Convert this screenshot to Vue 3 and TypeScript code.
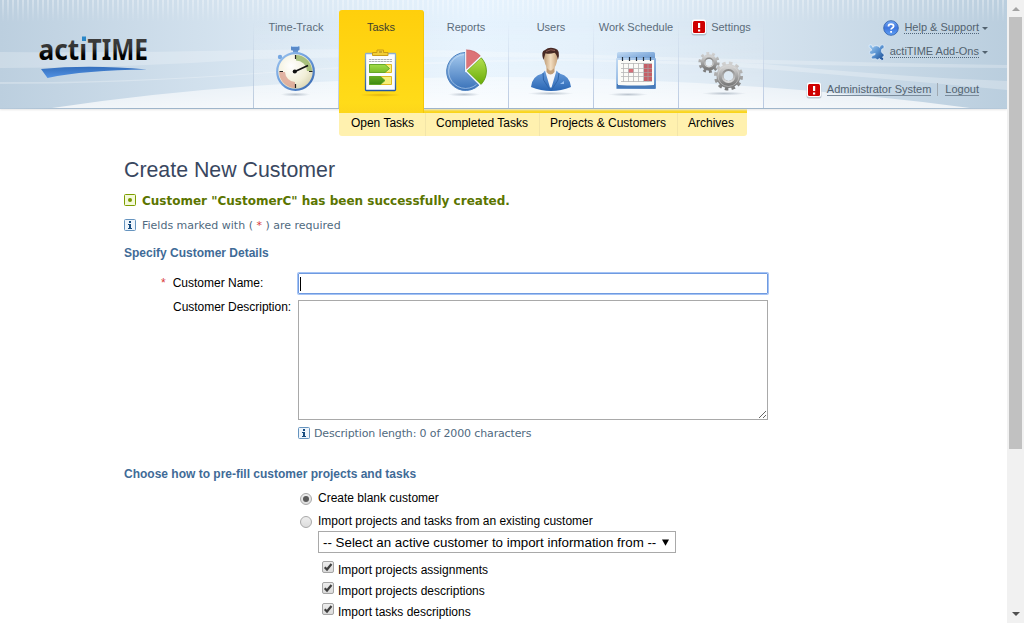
<script setup lang="ts">
interface MenuItem {
  id: string
  label: string
  alert?: boolean
}

const tabs: MenuItem[] = [
  { id: 'time', label: 'Time-Track' },
  { id: 'tasks', label: 'Tasks' },
  { id: 'reports', label: 'Reports' },
  { id: 'users', label: 'Users' },
  { id: 'schedule', label: 'Work Schedule' },
  { id: 'settings', label: 'Settings', alert: true },
]
const activeTab = 'tasks'

const subTabs: MenuItem[] = [
  { id: 'open', label: 'Open Tasks' },
  { id: 'completed', label: 'Completed Tasks' },
  { id: 'projects', label: 'Projects & Customers' },
  { id: 'archives', label: 'Archives' },
]

const importOptions: string[] = [
  'Import projects assignments',
  'Import projects descriptions',
  'Import tasks descriptions',
]
</script>

<template>
  <div class="window">
    <div class="page">
      <header class="header">
        <svg class="backdrop" width="1007" height="109" viewBox="0 0 1007 109">
          <defs>
            <linearGradient id="sky" x1="0" x2="1" y1="0" y2="0">
              <stop offset="0" stop-color="#bccfdf" />
              <stop offset="0.25" stop-color="#d7e5f1" />
              <stop offset="0.47" stop-color="#e6f3fe" />
              <stop offset="0.58" stop-color="#e3f0fb" />
              <stop offset="0.75" stop-color="#d5e3ef" />
              <stop offset="1" stop-color="#bacede" />
            </linearGradient>
            <linearGradient id="fade" x1="0" x2="0" y1="0" y2="1">
              <stop offset="0" stop-color="#fff" stop-opacity="0.34" />
              <stop offset="1" stop-color="#fff" stop-opacity="0" />
            </linearGradient>
            <pattern id="stripes" width="5" height="22" patternUnits="userSpaceOnUse">
              <rect x="2" width="2" height="22" fill="url(#fade)" />
            </pattern>
            <linearGradient id="hill" x1="0" x2="0" y1="0" y2="1">
              <stop offset="0" stop-color="#fff" stop-opacity="0.45" />
              <stop offset="1" stop-color="#fff" stop-opacity="0.75" />
            </linearGradient>
            <linearGradient id="baseline" x1="0" x2="1" y1="0" y2="0">
              <stop offset="0" stop-color="#b7cadb" />
              <stop offset="0.13" stop-color="#9fb5ca" />
              <stop offset="0.85" stop-color="#9fb5ca" />
              <stop offset="1" stop-color="#b7cadb" />
            </linearGradient>
          </defs>
          <rect width="1007" height="109" fill="url(#sky)" />
          <rect width="1007" height="22" fill="url(#stripes)" />
          <path d="M0 52 Q130 53 256 50 T600 55 Q820 62 1007 65 V68 Q800 66 700 61 Q450 54 256 59 Q130 68 0 68Z" fill="#fff" opacity="0.24" />
          <path d="M0 82 Q120 83 256 73 Q420 60 560 59 Q700 61 764 64 Q900 77 1007 81 V90 Q880 78 764 69 Q680 63 560 61 Q420 62 256 74 Q120 84 0 84Z" fill="#fff" opacity="0.26" />
          <path d="M52 108 Q250 78 500 77 Q750 79 970 108Z" fill="url(#hill)" />
          <rect y="108" width="1007" height="1" fill="url(#baseline)" />
        </svg>

        <div class="brand">
          <svg width="140" height="76" viewBox="34 16 140 76">
            <defs>
              <linearGradient id="ink" gradientUnits="userSpaceOnUse" x1="0" x2="0" y1="39" y2="61">
                <stop offset="0" stop-color="#3c3c3c" />
                <stop offset="0.4" stop-color="#333" />
                <stop offset="0.75" stop-color="#000" />
              </linearGradient>
              <linearGradient id="swoosh" x1="0" x2="0" y1="0" y2="1">
                <stop offset="0" stop-color="#346fbd" />
                <stop offset="1" stop-color="#5292e4" />
              </linearGradient>
            </defs>
            <text class="wordmark" x="38.500" y="60.200" textLength="48.500" lengthAdjust="spacingAndGlyphs" fill="url(#ink)">actı</text>
            <text class="wordmark" x="87.500" y="60.200" textLength="60.500" lengthAdjust="spacingAndGlyphs" fill="url(#ink)">TIME</text>
            <rect x="82" y="36.500" width="4" height="4.500" fill="#2b87c8" />
            <path d="M41 69 Q90 64.500 147 69.500 Q85 70 47.500 78Z" fill="url(#swoosh)" />
          </svg>
        </div>

        <nav class="tabs">
          <a v-for="tab in tabs" :key="tab.id" class="tab" :class="{ active: tab.id === activeTab }">
            <span class="tab-label">
              <svg v-if="tab.alert" class="alert" width="16" height="17" viewBox="0 0 16 17">
                <rect x="0.500" y="1" width="15" height="15.500" rx="2.500" fill="#9aa8b4" opacity="0.6" />
                <rect x="0.800" y="0.500" width="14.400" height="14.500" rx="2.500" fill="#fff" />
                <rect x="2" y="2" width="12" height="12" rx="1.500" fill="#cf0000" />
                <path d="M7 4h2.200v5H7zM7 10.500h2.200v2H7z" fill="#fff" />
              </svg>
              <span>{{ tab.label }}</span>
            </span>

            <svg v-if="tab.id === 'time'" class="icon" viewBox="254 44 84 54">
              <defs>
                <linearGradient id="rim" x1="0" x2="1" y1="0" y2="1">
                  <stop offset="0" stop-color="#9cc4ef" /><stop offset="0.5" stop-color="#6a9bdb" /><stop offset="1" stop-color="#3464ad" />
                </linearGradient>
                <radialGradient id="face" cx="0.38" cy="0.35" r="0.75">
                  <stop offset="0" stop-color="#fff" /><stop offset="0.6" stop-color="#f2efd8" /><stop offset="1" stop-color="#d4cfaa" />
                </radialGradient>
                <radialGradient id="shade">
                  <stop offset="0" stop-color="#63758a" stop-opacity="0.4" /><stop offset="1" stop-color="#63758a" stop-opacity="0" />
                </radialGradient>
              </defs>
              <ellipse cx="295.500" cy="94.500" rx="15" ry="2" fill="url(#shade)" />
              <rect x="293" y="49" width="5" height="4" fill="#6996d0" />
              <rect x="291" y="46" width="8.500" height="4.500" rx="1" fill="#5889c9" />
              <path d="M291.500 46.500h7" stroke="#b3d3f4" />
              <circle cx="280" cy="57" r="2.200" fill="#75a7e2" />
              <circle cx="295.500" cy="71.500" r="18.300" fill="url(#face)" stroke="url(#rim)" stroke-width="2.200" />
              <path d="M296 55 A16.500 16.500 0 0 1 312 71 H307 A11 11 0 0 0 296 60.500Z" fill="#87ab54" opacity="0.7" />
              <path d="M279 72 A16.500 16.500 0 0 0 295 88 V82 A10.500 10.500 0 0 1 285 72Z" fill="#d58a7c" opacity="0.62" />
              <path d="M295.500 55v4M295.500 84v4M279.500 71.500h3.500M309 71.500h3.500" stroke="#222" stroke-width="1.200" />
              <path d="M295 71.500 L308 65.500" stroke="#111" stroke-width="1.700" />
              <circle cx="294.800" cy="71.500" r="2.100" fill="#111" />
            </svg>

            <svg v-else-if="tab.id === 'tasks'" class="icon" viewBox="339 44 84 54">
              <defs>
                <linearGradient id="board" x1="0" x2="0" y1="0" y2="1">
                  <stop offset="0" stop-color="#8fb0cd" /><stop offset="1" stop-color="#2459a4" />
                </linearGradient>
                <linearGradient id="arrow" x1="0" x2="0" y1="0" y2="1">
                  <stop offset="0" stop-color="#a2dc48" /><stop offset="0.45" stop-color="#76b825" /><stop offset="1" stop-color="#3c8a10" />
                </linearGradient>
                <radialGradient id="amber">
                  <stop offset="0" stop-color="#b37b00" stop-opacity="0.4" /><stop offset="1" stop-color="#b37b00" stop-opacity="0" />
                </radialGradient>
              </defs>
              <ellipse cx="380.500" cy="95" rx="21" ry="1.800" fill="url(#amber)" />
              <rect x="365.500" y="53.500" width="30" height="37" rx="0.800" fill="#fcfdfd" stroke="url(#board)" stroke-width="1.300" />
              <path d="M372.500 55.500v-3h4.500v-2.500h6.500v2.500h4.500v3z" fill="#f1ce38" stroke="#ca9c17" />
              <path d="M379 52h3" stroke="#a58115" />
              <path d="M369 59.500h23M369 61.500h23" stroke="#aeb0b1" stroke-dasharray="2.500 0.500" />
              <path d="M369.500 64.500h22v8h-22zM369.500 76.500h22v8h-22z" fill="#f6ef79" stroke="#e0bb20" />
              <path d="M369.500 64.500h15.500l4.500 4-4.500 4h-15.500zM369.500 76.500h11l4.500 4-4.500 4h-11z" fill="url(#arrow)" stroke="#5da526" stroke-width="0.900" />
            </svg>

            <svg v-else-if="tab.id === 'reports'" class="icon" viewBox="424 44 84 54">
              <defs>
                <linearGradient id="pieBlue" x1="0" x2="0" y1="0" y2="1">
                  <stop offset="0" stop-color="#a7cbef" /><stop offset="1" stop-color="#3770b8" />
                </linearGradient>
                <linearGradient id="pieGreen" x1="0" x2="0" y1="0" y2="1">
                  <stop offset="0" stop-color="#b3e050" /><stop offset="1" stop-color="#69ac08" />
                </linearGradient>
              </defs>
              <ellipse cx="464" cy="94.500" rx="16" ry="2" fill="url(#shade)" />
              <path d="M465.200 52.500 A19 19 0 1 0 479 85 L465.200 71.500Z" fill="url(#pieBlue)" stroke="#4b80bf" stroke-width="1" />
              <path d="M464 54.500 A17 17 0 1 0 476.500 84.500" fill="none" stroke="#d2e6f9" stroke-width="0.800" opacity="0.7" />
              <path d="M466 50 A20 20 0 0 1 480.500 56 L466 70.500Z" fill="#dc7377" stroke="#c85054" stroke-width="0.800" />
              <path d="M467 71 L481 57.500 A19.500 19.500 0 0 1 481 84.500Z" fill="url(#pieGreen)" stroke="#629c16" stroke-width="0.900" />
              <path d="M465.700 50V71 L481 56.500M466 71 L481 86" fill="none" stroke="#f3f9ff" stroke-width="1.200" />
            </svg>

            <svg v-else-if="tab.id === 'users'" class="icon" viewBox="509 44 84 54">
              <defs>
                <linearGradient id="jacket" x1="0" x2="0" y1="0" y2="1">
                  <stop offset="0" stop-color="#6b9edc" /><stop offset="1" stop-color="#2966b4" />
                </linearGradient>
                <linearGradient id="skin" x1="0" x2="1" y1="0" y2="0">
                  <stop offset="0" stop-color="#bd9b76" /><stop offset="0.5" stop-color="#f3dec1" /><stop offset="1" stop-color="#c7a37b" />
                </linearGradient>
              </defs>
              <ellipse cx="550.500" cy="93.500" rx="23" ry="1.800" fill="url(#shade)" />
              <path d="M545 69 L543.500 74 L548 88 H554 L558 74 L556 69Z" fill="#f4f6f9" />
              <path d="M546.500 64h8v8q-4 5-8 0z" fill="#c19e78" />
              <path d="M543.800 55 Q543.500 50 550.500 50 Q558 50 557.500 56 Q557.200 67 552 70 Q550.500 71 549 70 Q544 66 543.800 55Z" fill="url(#skin)" />
              <path d="M543.400 60 Q540.500 51 545 50 Q549 46.500 555 48.500 Q561 50 557.900 60 Q557 54.500 554.500 52.800 Q549 54.500 545.500 53.200Z" fill="#482a25" />
              <path d="M546 51.500 Q551 48.500 555 50.500" fill="none" stroke="#8c5c55" stroke-width="1" />
              <path d="M531 87 Q532 76 542.500 73.500 L545 70.500 L550 87.500 H551.500 L556.500 70.500 L559.500 73.500 Q570 76 571 87 Q551 95 531 87Z" fill="url(#jacket)" />
              <path d="M543 73 L543.500 80 L550 90 M559 73 L558 80 L551.500 90" fill="none" stroke="#2f65aa" />
              <path d="M560 84l4-3v3z" fill="#98c0f0" />
            </svg>

            <svg v-else-if="tab.id === 'schedule'" class="icon" viewBox="594 44 84 54">
              <defs>
                <linearGradient id="calTop" x1="0" x2="1" y1="0" y2="1">
                  <stop offset="0" stop-color="#c4dcf4" /><stop offset="0.5" stop-color="#8bb2df" /><stop offset="1" stop-color="#5a8bc6" />
                </linearGradient>
              </defs>
              <ellipse cx="628" cy="94.500" rx="20" ry="1.800" fill="url(#shade)" />
              <rect x="617" y="52" width="38" height="10" rx="1.500" fill="url(#calTop)" />
              <rect x="616" y="58" width="40" height="31" rx="1" fill="url(#calTop)" />
              <rect x="617" y="84" width="38" height="4.500" fill="#477ab9" />
              <path d="M618 60h36v25q-18 1-36 0z" fill="#fbfbf7" />
              <path d="M644 64h8v17h-8z" fill="#c55e65" />
              <path d="M628.500 69h5v4h-5z" fill="#d86f78" />
              <path d="M621 63.500h31M621 68.500h31M621 72.500h31M621 76.500h31M621 81.500h31M623.500 63v19M628.500 63v19M633.500 63v19M638.500 63v19M643.500 63v19M648 63v19" stroke="#a7a7a7" stroke-width="0.800" opacity="0.8" />
              <path d="M622.500 57v4M629.500 57v4M636.500 57v4M643.500 57v4M650.500 57v4" stroke="#27313e" stroke-width="1.200" />
            </svg>

            <svg v-else class="icon" viewBox="679 44 84 54">
              <defs>
                <linearGradient id="steel" x1="0" x2="0" y1="0" y2="1">
                  <stop offset="0" stop-color="#d0d0d0" /><stop offset="1" stop-color="#7c7c7c" />
                </linearGradient>
                <linearGradient id="steelIn" x1="0" x2="0" y1="0" y2="1">
                  <stop offset="0" stop-color="#8a8a8a" /><stop offset="1" stop-color="#dcdcdc" />
                </linearGradient>
              </defs>
              <ellipse cx="724" cy="93.500" rx="22" ry="1.800" fill="url(#shade)" />
              <circle cx="709" cy="62.500" r="9" fill="none" stroke="url(#steel)" stroke-width="3.200" stroke-dasharray="2.800 2.855" />
              <circle cx="709" cy="62.500" r="6" fill="none" stroke="url(#steel)" stroke-width="4.600" />
              <circle cx="709" cy="62.500" r="4.300" fill="none" stroke="url(#steelIn)" stroke-width="1.400" />
              <circle cx="728.500" cy="76" r="12.700" fill="none" stroke="url(#steel)" stroke-width="3.600" stroke-dasharray="3.500 3.150" />
              <circle cx="728.500" cy="76" r="8.500" fill="none" stroke="url(#steel)" stroke-width="7" />
              <circle cx="728.500" cy="76" r="6" fill="none" stroke="url(#steelIn)" stroke-width="1.800" />
              <circle cx="728.500" cy="76" r="10.500" fill="none" stroke="#ddd" stroke-width="0.700" opacity="0.7" />
            </svg>
          </a>
        </nav>

        <div class="account">
          <div class="account-row help">
            <svg width="16" height="16" viewBox="0 0 16 16">
              <defs>
                <linearGradient id="orb" x1="0" x2="0" y1="0" y2="1">
                  <stop offset="0" stop-color="#74a8f4" /><stop offset="0.5" stop-color="#3e75de" /><stop offset="1" stop-color="#5fa0f4" />
                </linearGradient>
              </defs>
              <circle cx="8" cy="8" r="7.300" fill="url(#orb)" stroke="#3966af" stroke-width="0.900" />
              <path d="M5.500 6.400 Q5.500 4.200 8 4.200 Q10.600 4.200 10.600 6.200 Q10.600 7.400 8.900 8.200 Q8.100 8.600 8.100 9.600 M8.100 11v1.800" fill="none" stroke="#fff" stroke-width="1.800" />
            </svg>
            <span class="dotted">Help &amp; Support</span>
            <span class="arrow"></span>
          </div>
          <div class="account-row addons">
            <svg width="17" height="17" viewBox="0 0 17 17">
              <defs>
                <linearGradient id="puzzle" x1="0" x2="1" y1="0" y2="1">
                  <stop offset="0" stop-color="#a5cff2" /><stop offset="0.5" stop-color="#5992d0" /><stop offset="1" stop-color="#15478d" />
                </linearGradient>
              </defs>
              <path d="M1 1.300 Q2.500.2 4 1.300 L4.800 3.400 Q5.800 1.600 8.300 1.700 Q10.600 1.700 11.600 3.400 L12.500 1.300 Q14.500.2 16 1.600 Q16.500 3.500 15 4.700 L13.700 5.300 Q12.800 8 14.500 9.300 Q16.500 9.400 16 11.600 L14.500 13.200 L16 15 Q15 17 13 16 L11.500 14.500 L9.500 15.800 L7.500 14.700 L4 15 L3.200 13.200 L5 11.200 Q7.500 11.400 7.200 9.400 L3.800 10.300 Q1 10.400 1.300 8 Q2.200 6.500 3.600 6.300 L3.200 4.800 Q.3 3.700 1 1.300Z" fill="url(#puzzle)" stroke="#e5f1fd" stroke-width="0.700" />
            </svg>
            <span class="dotted">actiTIME Add-Ons</span>
            <span class="arrow"></span>
          </div>
          <div class="account-row user">
            <svg width="16" height="17" viewBox="0 0 16 17">
              <rect x="0.500" y="1" width="15" height="15.500" rx="2.500" fill="#9aa8b4" opacity="0.6" />
              <rect x="0.800" y="0.500" width="14.400" height="14.500" rx="2.500" fill="#fff" />
              <rect x="2" y="2" width="12" height="12" rx="1.500" fill="#cf0000" />
              <path d="M7 4h2.200v5H7zM7 10.500h2.200v2H7z" fill="#fff" />
            </svg>
            <span class="solid">Administrator System</span>
            <span class="divider"></span>
            <span class="solid">Logout</span>
          </div>
        </div>
      </header>

      <nav class="subnav">
        <a v-for="item in subTabs" :key="item.id" :class="item.id">{{ item.label }}</a>
      </nav>

      <main class="content">
        <h1>Create New Customer</h1>
        <div class="notice success">
          <svg width="12" height="12" viewBox="0 0 12 12">
            <rect x="0.500" y="0.500" width="11" height="11" rx="1" fill="#f4f9db" stroke="#7c9d00" />
            <circle cx="6" cy="6" r="2" fill="#789a00" />
          </svg>
          <span>Customer "CustomerC" has been successfully created.</span>
        </div>
        <div class="notice required-note">
          <svg width="12" height="12" viewBox="0 0 12 12">
            <rect x="0.500" y="0.500" width="11" height="11" rx="1" fill="#eef5fc" stroke="#6694bf" />
            <path d="M5 2h2v2H5zM4 5h3v4h1v1H4V9h1V6H4z" fill="#164c80" />
          </svg>
          <span>Fields marked with ( <i>*</i> ) are required</span>
        </div>

        <h2 class="details-title">Specify Customer Details</h2>
        <div class="fields">
          <label class="name-label"><i>*</i><span>Customer Name:</span></label>
          <div class="text-input"><span class="cursor"></span></div>
          <label class="desc-label">Customer Description:</label>
          <textarea></textarea>
          <div class="notice length-note">
            <svg width="12" height="12" viewBox="0 0 12 12">
              <rect x="0.500" y="0.500" width="11" height="11" rx="1" fill="#eef5fc" stroke="#6694bf" />
              <path d="M5 2h2v2H5zM4 5h3v4h1v1H4V9h1V6H4z" fill="#164c80" />
            </svg>
            <span>Description length: 0 of 2000 characters</span>
          </div>
        </div>

        <h2 class="prefill-title">Choose how to pre-fill customer projects and tasks</h2>
        <div class="prefill">
          <div class="choice first"><span class="radio chosen"></span><span>Create blank customer</span></div>
          <div class="choice second"><span class="radio"></span><span>Import projects and tasks from an existing customer</span></div>
          <div class="select">
            <span>-- Select an active customer to import information from --</span>
            <svg width="7" height="7" viewBox="0 0 7 7"><path d="M0 0.500h7L3.500 6.800z" fill="#000" /></svg>
          </div>
          <div v-for="option in importOptions" :key="option" class="check">
            <svg width="12" height="13" viewBox="0 0 12 13">
              <defs>
                <linearGradient id="box" x1="0" x2="0" y1="0" y2="1">
                  <stop offset="0" stop-color="#eee" /><stop offset="1" stop-color="#d9d9d9" />
                </linearGradient>
              </defs>
              <rect x="0.500" y="0.500" width="11" height="11" rx="1.500" fill="url(#box)" stroke="#a5a5a5" />
              <path d="M2.700 6.200 L5 8.500 L9.500 3" fill="none" stroke="#3f3f3f" stroke-width="2.200" />
            </svg>
            <span>{{ option }}</span>
          </div>
        </div>
      </main>
    </div>

    <aside class="scrollbar">
      <span class="up"></span>
      <span class="thumb"></span>
      <span class="down"></span>
    </aside>
  </div>
</template>

<style>
body {
  margin: 0;
  overflow: hidden;
}
</style>

<style scoped>
.window {
  display: flex;
  width: 1024px;
  height: 623px;
  overflow: hidden;
  background: #fff;
  font-family: "Liberation Sans", Arial, sans-serif;
  font-size: 12px;
  color: #000;
}
svg {
  display: block;
  flex: none;
}
.page {
  width: 1007px;
  height: 623px;
  overflow: hidden;
}
.header {
  position: relative;
  display: flex;
  height: 109px;
  box-shadow: 0 1px 2px #e6e6e6;
}
.backdrop {
  position: absolute;
  inset: 0;
}
.brand {
  position: relative;
  box-sizing: border-box;
  width: 253px;
  padding: 16px 0 0 34px;
}
.wordmark {
  font-family: "Noto Sans", sans-serif;
  font-size: 28.5px;
  font-weight: 700;
}
.tabs {
  position: relative;
  z-index: 2;
  display: flex;
  height: 108px;
  border-left: 1px solid;
  border-image: linear-gradient(#b8c8dc00 20%, #b8c8dc) 1;
}
.tab {
  box-sizing: border-box;
  width: 85px;
  height: 108px;
  padding-top: 19px;
  border: 0 solid;
  border-right-width: 1px;
  border-image: linear-gradient(#b8c8e000 20%, #b8c8e0) 1;
  background: linear-gradient(#fff0 20%, #ffffff40);
  color: #5b6c7b;
  font-size: 11px;
}
.tab.active {
  height: 103px;
  margin-top: 10px;
  padding-top: 9px;
  border-color: #f5c808;
  border-image: none;
  border-radius: 3px 3px 0 0;
  background: linear-gradient(#ffcf0c, #ffdb19 90%, #fdd61a);
  color: #3e3f2e;
}
.tab-label {
  display: flex;
  align-items: center;
  justify-content: center;
  height: 16px;
  margin-bottom: 9px;
  white-space: nowrap;
}
.alert {
  margin: 1px 4px 0 0;
}
.icon {
  width: 84px;
  height: 54px;
}
.account {
  position: relative;
  flex: 1;
  padding: 17px 19px 0 0;
  color: #52626f;
  font-size: 11px;
}
.account-row {
  display: flex;
  align-items: center;
  justify-content: flex-end;
  height: 20px;
  line-height: 12px;
  white-space: nowrap;
}
.account-row svg {
  margin: 2px 5px 0 0;
}
.addons {
  margin-top: 4px;
}
.user {
  margin-top: 18px;
  padding-right: 9px;
}
.dotted {
  border-bottom: 1px dotted #52677c;
}
.solid {
  border-bottom: 1px solid #7b8c9c;
}
.arrow {
  margin: 2px 0 0 3px;
  border: 3px solid transparent;
  border-top-color: #52626f;
  border-bottom: 0;
}
.divider {
  width: 1px;
  height: 13px;
  margin: 0 7px 0 6px;
  background: #a0a9b1;
}
.subnav {
  display: flex;
  box-sizing: border-box;
  width: 408px;
  height: 27px;
  margin-left: 339px;
  border-top: 4px solid #fad51c;
  border-radius: 0 0 3px 3px;
  background: #fff1af;
  line-height: 21px;
}
.subnav a {
  box-sizing: border-box;
  border-right: 1px solid #f3e5a8;
  text-align: center;
  white-space: nowrap;
}
.subnav a:last-child {
  border: 0;
}
.open { width: 87px; padding-left: 1px; }
.completed { width: 114px; padding-right: 1px; }
.projects { width: 138px; padding-right: 1px; }
.archives { width: 68px; padding-right: 2px; }
.content {
  padding: 20px 0 0 124px;
}
h1 {
  height: 28px;
  margin: 0;
  color: #39475f;
  font-size: 21.33px;
  font-weight: 400;
  line-height: 28px;
}
h2 {
  height: 20px;
  margin: 0;
  color: #3f6b97;
  font-size: 12px;
  line-height: 20px;
}
.notice {
  display: flex;
  align-items: center;
  gap: 6px;
  height: 20px;
  color: #506a80;
  font-family: Verdana, "DejaVu Sans", sans-serif;
  font-size: 11px;
  white-space: nowrap;
}
i {
  color: #d93a3a;
  font-style: normal;
}
.success {
  margin-top: 6px;
  color: #5b7500;
  font-size: 12px;
  font-weight: 700;
}
.success span {
  padding-top: 2px;
}
.required-note {
  margin-top: 5px;
}
.details-title {
  margin-top: 8px;
}
.fields {
  display: grid;
  grid-template-columns: 174px 471px;
  grid-template-rows: 21px 120px 20px;
  row-gap: 6px;
  margin-top: 10px;
}
.name-label {
  display: flex;
  gap: 7px;
  padding-left: 37px;
  line-height: 20px;
}
.name-label i {
  font-size: 12px;
}
.desc-label {
  padding-left: 49px;
  line-height: 14px;
  letter-spacing: -0.03px;
}
.text-input {
  box-sizing: border-box;
  width: 470px;
  height: 21px;
  padding: 3px 1px;
  border: 1px solid #6f9ae0;
  border-radius: 1px;
  box-shadow: 0 0 0 1px #a4c3f5;
}
.cursor {
  display: block;
  width: 1px;
  height: 14px;
  background: #000;
}
textarea {
  box-sizing: border-box;
  width: 470px;
  height: 120px;
  margin: 0;
  padding: 2px;
  border: 1px solid #a9a9a9;
  background: #fff;
}
.length-note {
  grid-column: 2;
  gap: 4px;
  margin-top: -3px;
  letter-spacing: -0.14px;
}
.prefill-title {
  margin-top: 18px;
}
.prefill {
  padding: 4px 0 0 176px;
}
.choice {
  display: flex;
  align-items: center;
  gap: 6px;
  height: 20px;
}
.second {
  margin-top: 3px;
}
.radio {
  display: flex;
  align-items: center;
  justify-content: center;
  box-sizing: border-box;
  width: 12px;
  height: 12px;
  margin-top: 2px;
  border: 1px solid #a8a8a8;
  border-radius: 50%;
  background: linear-gradient(#eee, #dcdcdc);
}
.chosen::after {
  content: "";
  width: 6px;
  height: 6px;
  border-radius: 50%;
  background: #5a5a5a;
}
.select {
  display: flex;
  align-items: center;
  justify-content: space-between;
  box-sizing: border-box;
  width: 358px;
  height: 22px;
  margin: 0 0 6px 18px;
  padding: 0 6px 0 4px;
  border: 1px solid #a9a9a9;
  font-size: 13.33px;
  white-space: nowrap;
}
.check {
  display: flex;
  align-items: center;
  gap: 4px;
  height: 21px;
  padding-left: 22px;
}
.check svg {
  margin-top: -4px;
}
.scrollbar {
  display: flex;
  flex-direction: column;
  align-items: center;
  width: 17px;
  height: 623px;
  background: #f1f1f1;
}
.up {
  margin: 7px 0 6px;
  border: 4px solid transparent;
  border-top: 0;
  border-bottom-color: #a3a3a3;
}
.thumb {
  width: 13px;
  height: 432px;
  background: #c1c1c1;
}
.down {
  margin-top: auto;
  margin-bottom: 7px;
  border: 4px solid transparent;
  border-top-color: #505050;
  border-bottom: 0;
}
</style>
